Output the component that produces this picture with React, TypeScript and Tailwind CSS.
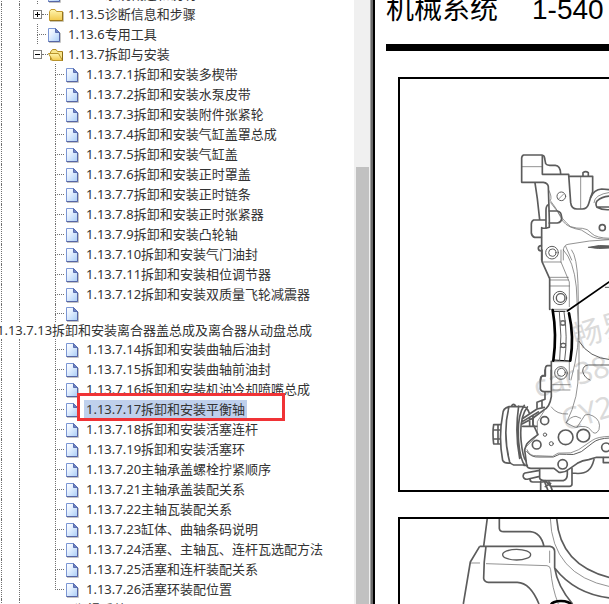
import clsx from "clsx";

type TreeItem = { label: string; active?: boolean };

const sections: TreeItem[] = [
  { label: "1.13.7.1拆卸和安装多楔带" },
  { label: "1.13.7.2拆卸和安装水泵皮带" },
  { label: "1.13.7.3拆卸和安装附件张紧轮" },
  { label: "1.13.7.4拆卸和安装气缸盖罩总成" },
  { label: "1.13.7.5拆卸和安装气缸盖" },
  { label: "1.13.7.6拆卸和安装正时罩盖" },
  { label: "1.13.7.7拆卸和安装正时链条" },
  { label: "1.13.7.8拆卸和安装正时张紧器" },
  { label: "1.13.7.9拆卸和安装凸轮轴" },
  { label: "1.13.7.10拆卸和安装气门油封" },
  { label: "1.13.7.11拆卸和安装相位调节器" },
  { label: "1.13.7.12拆卸和安装双质量飞轮减震器" },
];

const moreSections: TreeItem[] = [
  { label: "1.13.7.14拆卸和安装曲轴后油封" },
  { label: "1.13.7.15拆卸和安装曲轴前油封" },
  { label: "1.13.7.16拆卸和安装机油冷却喷嘴总成" },
  { label: "1.13.7.17拆卸和安装平衡轴", active: true },
  { label: "1.13.7.18拆卸和安装活塞连杆" },
  { label: "1.13.7.19拆卸和安装活塞环" },
  { label: "1.13.7.20主轴承盖螺栓拧紧顺序" },
  { label: "1.13.7.21主轴承盖装配关系" },
  { label: "1.13.7.22主轴瓦装配关系" },
  { label: "1.13.7.23缸体、曲轴条码说明" },
  { label: "1.13.7.24活塞、主轴瓦、连杆瓦选配方法" },
  { label: "1.13.7.25活塞和连杆装配关系" },
  { label: "1.13.7.26活塞环装配位置" },
];

const PageIcon = () => (
  <svg className="h-4 w-4 shrink-0" viewBox="0 -1 16 16" overflow="visible" aria-hidden="true">
    <defs>
      <linearGradient id="page" x1="0" y1="0" x2="1" y2="1">
        <stop offset="0" stopColor="#ffffff" />
        <stop offset="0.35" stopColor="#e8f2ff" />
        <stop offset="1" stopColor="#a9cdf7" />
      </linearGradient>
    </defs>
    <path d="M3 15.5H14.5V6" fill="none" stroke="#c4c4c4" />
    <path d="M2.5 1.5H9.5L13.5 5.5V14.5H2.5Z" fill="url(#page)" stroke="#7b96d4" />
    <path d="M13.5 5V14.5H2.5" fill="none" stroke="#5665a5" />
    <path d="M9.5 1.5V5.5H13.5Z" fill="#6d82c2" stroke="#5a6eb0" />
  </svg>
);

const FolderIcon = ({ open }: { open?: boolean }) => (
  <svg className="h-4 w-4 shrink-0" viewBox="0 -1 16 16" overflow="visible" aria-hidden="true">
    <defs>
      <linearGradient id="folder" x1="0" y1="0" x2="0" y2="1">
        <stop offset="0" stopColor="#fff6b0" />
        <stop offset="1" stopColor="#f2c94c" />
      </linearGradient>
    </defs>
    {open ? (
      <>
        <path d="M2.5 13V5L4.5 2.5H8L9.5 4.5H14.5V13.5Z" fill="#f8e58c" stroke="#b28b22" />
        <path d="M0.5 6.5H10.5L14.5 13.5H4.5Z" fill="url(#folder)" stroke="#b8942c" />
        <path d="M14.5 5V13.5" stroke="#8b6a12" />
      </>
    ) : (
      <>
        <path d="M2 14.5H15.5V5" fill="none" stroke="#c9c4b0" />
        <path d="M1.5 13.5V4.5L3 2.5H7L8.5 4.5H14.5V13.5Z" fill="url(#folder)" stroke="#c29a30" />
        <path d="M14.5 5V13.5H2" fill="none" stroke="#98741a" />
      </>
    )}
  </svg>
);

const Guide = ({ show = true }: { show?: boolean }) => (
  <span className={clsx("w-[18px] shrink-0 self-stretch", show && "border-l border-dotted border-[#707070]")} />
);

// vertical line with a horizontal stub towards the icon
const Branch = ({ last }: { last?: boolean }) => (
  <span className="flex w-[9px] shrink-0 flex-col self-stretch">
    <span className="w-full flex-1 border-b border-l border-dotted border-[#707070]" />
    <span className={clsx("w-full flex-1", !last && "border-l border-dotted border-[#707070]")} />
  </span>
);

const Toggle = ({ open }: { open?: boolean }) => (
  <span className="flex w-[11px] shrink-0 items-center self-stretch">
    <button
      type="button"
      aria-label={open ? "收起" : "展开"}
      className="-ml-1 flex h-[9px] w-[9px] shrink-0 items-center justify-center border border-[#808080] bg-white"
    >
      <svg className="h-[7px] w-[7px] shrink-0" viewBox="0 0 7 7">
        <path d={open ? "M1 3.5H6" : "M1 3.5H6M3.5 1V6"} stroke="#000" />
      </svg>
    </button>
    <span className="flex-1 border-t border-dotted border-[#707070]" />
  </span>
);

const Leaf = ({ item, last }: { item: TreeItem; last?: boolean }) => (
  <li className="flex h-5 items-center">
    <Guide />
    <Guide />
    <Guide show={false} />
    <Branch last={last} />
    <PageIcon />
    <a
      href="#"
      className={clsx("ml-1 flex h-[18px] items-center px-0.5 whitespace-nowrap", item.active && "bg-[#bfd0ec]")}
    >
      {item.label}
    </a>
  </li>
);

const Tree = () => (
  <ul className="-mt-4 pl-px">
    <li className="flex h-5 items-center">
      <Guide />
      <Guide />
      <Branch />
      <PageIcon />
      <a href="#" className="ml-1.5 whitespace-nowrap">1.13.4系统概述和说明</a>
    </li>
    <li className="flex h-5 items-center">
      <Guide />
      <Guide />
      <Toggle />
      <FolderIcon />
      <a href="#" className="ml-1 whitespace-nowrap">1.13.5诊断信息和步骤</a>
    </li>
    <li className="flex h-5 items-center">
      <Guide />
      <Guide />
      <Branch />
      <PageIcon />
      <a href="#" className="ml-1.5 whitespace-nowrap">1.13.6专用工具</a>
    </li>
    <li className="flex h-5 items-center">
      <Guide />
      <Guide />
      <Toggle open />
      <FolderIcon open />
      <a href="#" className="ml-1 whitespace-nowrap">1.13.7拆卸与安装</a>
    </li>
    {sections.map((item) => (
      <Leaf key={item.label} item={item} />
    ))}
    <li>
      <div className="flex h-[18px] items-center">
        <Guide />
        <Guide />
        <Guide show={false} />
        <Branch />
        <PageIcon />
      </div>
      <a href="#" className="-ml-1 block leading-[17px] whitespace-nowrap">
        1.13.7.13拆卸和安装离合器盖总成及离合器从动盘总成
      </a>
    </li>
    {moreSections.map((item, i) => (
      <Leaf key={item.label} item={item} last={i === moreSections.length - 1} />
    ))}
    <li className="flex h-5 items-center">
      <Guide />
      <Guide />
      <a href="#" className="ml-3 whitespace-nowrap">1.14润滑系统</a>
    </li>
  </ul>
);

const EngineDrawing = () => (
  <svg className="h-[411px] w-[209px]" viewBox="400 79 209 411" fill="none" stroke="#5c5c5c" strokeLinejoin="round" strokeLinecap="round">
    <g
      fill="#d2d2d2"
      stroke="none"
      fillOpacity="0.8"
      fontFamily="'Noto Sans','Noto Sans CJK SC',sans-serif"
      fontSize="30"
    >
      <text transform="translate(576 348) rotate(-17)">畅易</text>
      <text transform="translate(537 398) rotate(-17)">car388</text>
      <text transform="translate(565 431) rotate(-17)">CY2017</text>
    </g>
    <g transform="translate(480 140) scale(.3333)" strokeWidth="5">
      <path d="M131 45H185Q194 46 194 56L197 71Q200 76 209 76H226Q241 77 242 101M131 45Q125 47 125 55V127H190Q204 129 205 140L208 240V262Q194 267 185 263V360" />
      <path d="M187 47V103H266L272 188Q274 207 291 207H307Q322 206 326 191L332 172Q335 164 338 155V109H266M309 108V98Q317 92 325 98V108" />
      <path d="M165 129L172 176 179 239M205 194Q198 197 198 211V264M208 213H232Q244 215 245 231T232 249H208M197 240H161Q154 243 154 253V279Q156 290 164 292H184M184 317Q175 317 175 325T184 333" />
      <path d="M332 172Q342 149 365 147L390 149M390 168Q366 169 351 183Q345 192 351 202Q367 211 390 209M352 201H390" />
      <path d="M125 80H187M302 112V205M206 150Q217 171 211 182L225 201Q249 243 272 260Q291 266 307 265Q322 265 336 281Q348 294 390 295M212 188Q236 215 249 244Q264 264 304 270L331 287Q345 298 390 298M250 360V334Q250 315 264 313Q330 300 390 299M257 319L275 360M342 188Q342 164 390 157" strokeWidth="2" />
      <circle cx="244" cy="169" r="13" strokeWidth="3" />
      <path d="M235 178L250 163" strokeWidth="2" />
      <circle cx="367" cy="263" r="9" />
      <circle cx="216" cy="338" r="19" strokeWidth="3" />
      <circle cx="217" cy="338" r="11" strokeWidth="3" />
      <path d="M326 322Q358 313 390 318V324Q355 328 326 322Z" fill="#5c5c5c" strokeWidth="3" />
    </g>
    <g transform="translate(480 250) scale(.3333)" strokeWidth="5">
      <path d="M186 0V35L209 86V178M214 334V389M214 347H202Q196 349 196 357V378H187Q182 380 182 390" />
      <path d="M187 36H243L268 96V170M243 0V36M211 82H265M211 90H265M211 108H268M210 178H268M268 335V389M215 335H268M250 0Q281 31 289 111L294 212Q302 283 273 390M275 0Q291 20 294 100L297 276V390" strokeWidth="2" />
      <circle cx="240" cy="144" r="20" strokeWidth="3" />
      <circle cx="242" cy="144" r="13" strokeWidth="4" />
      <circle cx="243" cy="369" r="19" strokeWidth="3" />
      <circle cx="244" cy="367" r="12" strokeWidth="3" />
      <path d="M218 180Q231 252 220 332M267 190Q283 260 271 332" stroke="#000" strokeWidth="8" />
      <path d="M218 184H255M220 330L270 333" stroke="#000" strokeWidth="3" />
      <path d="M238 184Q247 259 239 331M252 185Q264 263 254 331M241 213H257M241 225H257M241 281H257M241 292H257" strokeWidth="3" />
      <circle cx="249" cy="219" r="7" strokeWidth="3" />
      <circle cx="250" cy="286" r="7" strokeWidth="3" />
      <path d="M262 183L390 94" stroke="#000" strokeWidth="5" />
      <path d="M376 112H390M297 274Q328 324 390 329M390 345H325Q309 346 308 364Q313 384 330 390" strokeWidth="3" />
    </g>
    <g transform="translate(480 370) scale(.3333)" strokeWidth="5">
      <path d="M214 0V80Q209 113 190 121L159 144V162L174 194Q149 211 140 223L134 239 140 286Q142 295 153 295H222L237 307Q254 309 265 299L292 280Q307 271 326 269L350 262H390M195 0V17H187Q181 20 181 29V57Q183 64 192 65H210M195 66V88L171 97V114M186 91V111" />
      <path d="M140 229Q154 214 165 205Q174 195 172 181V155L193 122M218 44H270M218 60H270M214 111Q230 134 263 132M294 0Q299 79 259 159L286 172Q323 164 332 180Q346 200 357 179Q364 151 339 138Q326 130 315 135L291 172M258 158Q272 139 288 139L302 145M141 239Q150 260 170 257L218 259Q233 245 252 249T296 239L337 211Q352 200 390 199" strokeWidth="2" />
      <path d="M140 244Q153 263 177 261H220Q239 248 259 253T304 245L339 218Q354 205 390 204" strokeWidth="3" />
      <path d="M68 134Q68 115 87 110H129Q143 112 148 130M68 134Q55 201 68 271Q73 281 90 279M87 110Q67 191 89 276Q92 283 101 285H132M94 110Q97 99 106 106M133 106Q110 139 116 216Q121 272 135 286M142 111Q118 142 123 210Q128 262 138 273M116 108Q104 190 119 265M61 164H41Q37 189 41 222H62M42 180H60M42 207H61M54 165V222M126 147L171 117 193 112M127 155L175 126M128 169H170M149 142V166M159 137V166M126 162L161 143M132 286H142" />
      <circle cx="194" cy="152" r="12" />
      <circle cx="170" cy="224" r="13" />
      <circle cx="257" cy="202" r="22" />
      <circle cx="310" cy="197" r="19" />
      <circle cx="248" cy="283" r="14" />
      <circle cx="378" cy="232" r="13" />
      <circle cx="195" cy="194" r="5" strokeWidth="3" />
      <circle cx="214" cy="221" r="6" strokeWidth="3" />
      <path d="M179 297V324Q180 330 193 332H250Q262 329 262 313V304M179 301L135 309Q128 312 130 321Q133 330 145 327L179 319M150 328Q150 336 158 336H190M276 295V309Q309 314 324 302Q336 293 342 269M276 309V342Q276 349 268 349H212L195 331M370 263V278H390M182 334V359M194 336L203 359M207 336L216 359M196 350L212 340" />
    </g>
  </svg>
);

const BlockDrawing = () => (
  <svg className="h-[85px] w-[209px]" viewBox="400 519 209 85" fill="none" stroke="#5c5c5c" strokeLinejoin="round">
    <g transform="translate(380 490) scale(.3333)" strokeWidth="5">
      <path d="M322 84L311 169M358 84V115Q359 125 371 125H450Q482 127 492 169M299 169H510Q525 172 524 187V234Q533 291 578 342M299 169L271 216 250 342M318 169Q311 215 311 265Q313 276 325 277H412Q451 278 477 342M530 84Q539 225 690 263M524 234Q585 312 690 324" />
      <ellipse cx="410" cy="194" rx="42" ry="16" strokeWidth="4" />
      <path d="M511 84Q516 254 690 290M271 219H300M318 221L501 227Q511 228 512 239Q516 294 535 342M509 182V219" strokeWidth="2" />
      <ellipse cx="543" cy="346" rx="30" ry="13" stroke="#000" strokeWidth="8" />
    </g>
  </svg>
);

const App = () => {
  return (
    <div className="relative flex h-screen overflow-hidden bg-white">
      <nav
        aria-label="目录"
        className="w-[354px] shrink-0 overflow-hidden font-['Noto_Sans','Noto_Sans_CJK_SC',sans-serif] text-[13px] leading-[18px] text-[#333333]"
      >
        <Tree />
      </nav>
      <div className="flex w-4 shrink-0 flex-col bg-[#f0f0f0] pt-[167px] pr-px pl-0.5">
        <div className="flex-1 bg-[#c1c1c1]" />
      </div>
      <div className="w-[5px] shrink-0 border-r-2 border-l border-r-black border-l-[#a0a0a0] bg-[#696969]" />
      <main className="min-w-0 flex-1 overflow-hidden pl-[11px] text-black">
        <header className="flex h-[51px] items-start gap-[34px] border-b-[7px] border-black font-['Liberation_Sans','Noto_Sans_CJK_SC',sans-serif] text-[28px] leading-5 whitespace-nowrap">
          <h1 className="font-normal">机械系统</h1>
          <span>1-540</span>
        </header>
        <div className="ml-3 pt-[26px]">
          <figure className="overflow-hidden border-2 border-r-0 border-black">
            <EngineDrawing />
          </figure>
          <figure className="mt-[25px] overflow-hidden border-2 border-r-0 border-b-0 border-black">
            <BlockDrawing />
          </figure>
        </div>
      </main>
      <div className="pointer-events-none absolute top-[393px] left-[77px] h-7 w-52 border-[3px] border-[#f03336]" />
    </div>
  );
};

export default App;
